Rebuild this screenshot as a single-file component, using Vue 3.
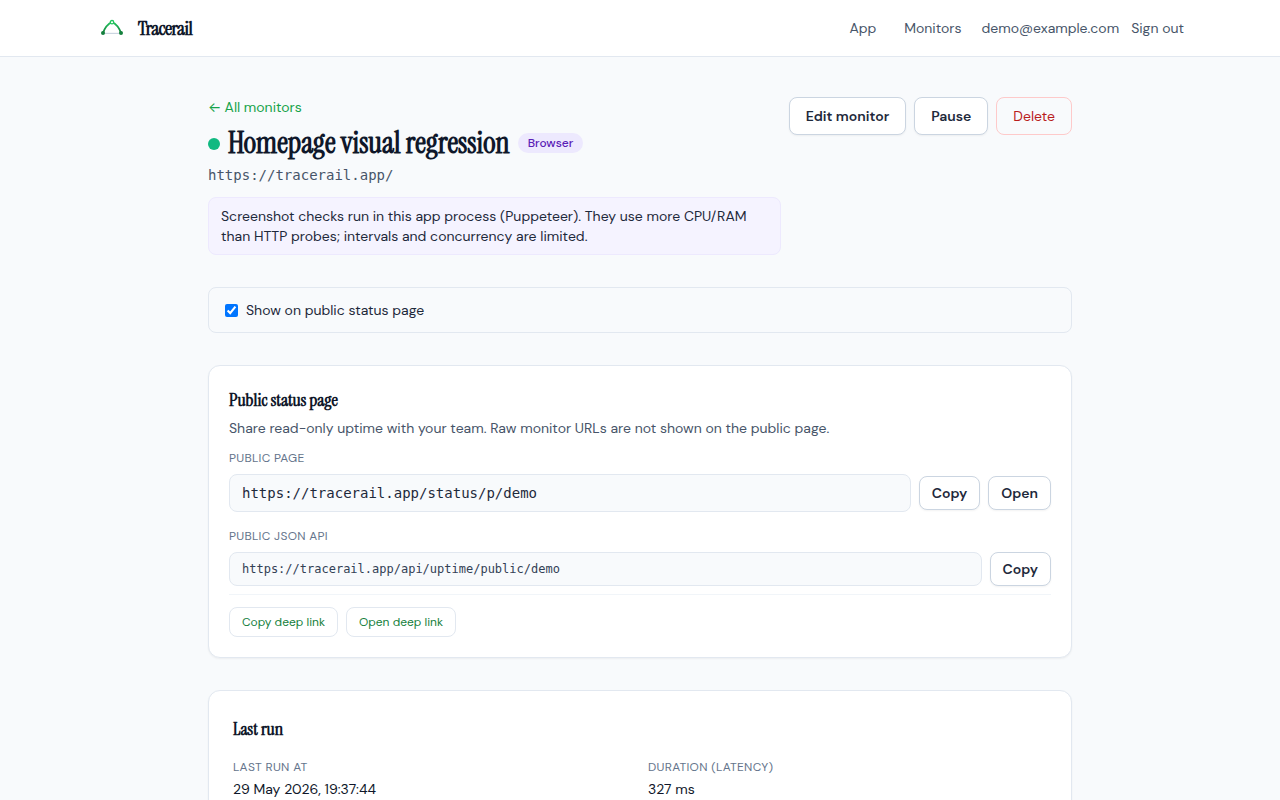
<template>
  <div class="page">
    <header class="topbar">
      <div class="topbar-inner">
        <a class="brand" href="#">
          <svg width="32" height="32" viewBox="0 0 32 32" fill="none" aria-hidden="true">
            <defs>
              <linearGradient id="rail" x1="16" y1="10" x2="16" y2="21" gradientUnits="userSpaceOnUse">
                <stop offset="0" stop-color="#22c55e" />
                <stop offset="1" stop-color="#15803d" />
              </linearGradient>
            </defs>
            <path d="M7 21.4H25" stroke="#cbd5e1" stroke-width="1.2" />
            <path
              d="M7 21C8.6 16.4 11.6 12 16 10C20.4 12 23.4 16.4 25 21"
              stroke="url(#rail)"
              stroke-width="1.9"
              stroke-linecap="round"
            />
            <circle cx="7" cy="21" r="2" fill="#15803d" />
            <circle cx="25" cy="21" r="2" fill="#15803d" />
            <circle cx="16" cy="10.2" r="1.7" fill="#fff" stroke="#22c55e" stroke-width="1.3" />
          </svg>
          <span>Tracerail</span>
        </a>
        <nav class="nav">
          <a href="#">App</a>
          <a href="#">Monitors</a>
          <div class="account">
            <span>{{ user.email }}</span>
            <a href="#">Sign out</a>
          </div>
        </nav>
      </div>
    </header>

    <main class="main">
      <section class="head">
        <div class="head-text">
          <a class="back" href="#"><span class="arrow">←</span> All monitors</a>
          <div class="title">
            <span class="dot"></span>
            <h1>{{ monitor.name }}</h1>
            <span class="badge">{{ monitor.type }}</span>
          </div>
          <p class="url">{{ monitor.url }}</p>
          <p class="notice">
            Screenshot checks run in this app process (Puppeteer). They use more CPU/RAM than HTTP
            probes; intervals and concurrency are limited.
          </p>
        </div>
        <div class="actions">
          <button class="btn">Edit monitor</button>
          <button class="btn">Pause</button>
          <button class="btn btn-danger">Delete</button>
        </div>
      </section>

      <label class="toggle">
        <input v-model="isPublic" type="checkbox" />
        <span>Show on public status page</span>
      </label>

      <section class="card share">
        <h2>Public status page</h2>
        <p class="muted">
          Share read-only uptime with your team. Raw monitor URLs are not shown on the public page.
        </p>
        <div class="label">Public page</div>
        <div class="field">
          <code>{{ links.page }}</code>
          <button class="btn btn-sm" @click="copy(links.page)">Copy</button>
          <button class="btn btn-sm">Open</button>
        </div>
        <div class="label label-api">Public JSON API</div>
        <div class="field">
          <code class="small">{{ links.api }}</code>
          <button class="btn btn-sm" @click="copy(links.api)">Copy</button>
        </div>
        <div class="deep-links">
          <button class="btn-link" @click="copy(links.page)">Copy deep link</button>
          <button class="btn-link">Open deep link</button>
        </div>
      </section>

      <section class="card last-run">
        <h2>Last run</h2>
        <dl class="stats">
          <div v-for="stat in stats" :key="stat.label">
            <dt class="label">{{ stat.label }}</dt>
            <dd>{{ stat.value }}</dd>
          </div>
        </dl>
      </section>
    </main>
  </div>
</template>

<script setup>
import { ref } from "vue";

const user = { email: "demo@example.com" };

const monitor = {
  name: "Homepage visual regression",
  type: "Browser",
  url: "https://tracerail.app/",
};

const links = {
  page: "https://tracerail.app/status/p/demo",
  api: "https://tracerail.app/api/uptime/public/demo",
};

const stats = [
  { label: "Last run at", value: "29 May 2026, 19:37:44" },
  { label: "Duration (latency)", value: "327 ms" },
];

const isPublic = ref(true);

async function copy(text) {
  try {
    await navigator.clipboard.writeText(text);
  } catch (error) {
    console.log(error);
  }
}
</script>

<style>
body {
  margin: 0;
  background: #f8fafc;
}
</style>

<style scoped>
.page {
  height: 100vh;
  overflow: hidden;
  background: #f8fafc;
  color: #0f172a;
  font-family: "DM Sans", "Open Sans", sans-serif;
  font-size: 14px;
  line-height: 20px;
}

.page * {
  box-sizing: border-box;
}

a {
  color: inherit;
  text-decoration: none;
}

h1,
h2,
p,
dl,
dd {
  margin: 0;
}

h1,
h2,
.brand {
  font-family: "Instrument Serif", "Liberation Serif", serif;
  font-weight: 700;
}

.topbar {
  background: #fff;
  border-bottom: 1px solid #e2e8f0;
}

.topbar-inner {
  display: flex;
  align-items: center;
  justify-content: space-between;
  width: 1088px;
  height: 56px;
  margin: 0 auto;
}

.brand {
  display: flex;
  align-items: center;
  gap: 10px;
  font-size: 20px;
  line-height: 28px;
  letter-spacing: -0.025em;
}

.nav {
  display: flex;
  align-items: center;
  gap: 28px;
  color: #475569;
}

.account {
  display: flex;
  gap: 12px;
  margin-left: -8px;
}

.main {
  display: flex;
  flex-direction: column;
  gap: 32px;
  width: 864px;
  margin: 0 auto;
  padding-top: 40px;
}

.head {
  display: flex;
  align-items: flex-start;
  justify-content: space-between;
  gap: 8px;
}

.head-text {
  flex: 1;
  min-width: 0;
}

.back {
  display: block;
  height: 20px;
  color: #16a34a;
}

.arrow {
  font-family: Inter, sans-serif;
  letter-spacing: -0.5px;
}

.title {
  display: flex;
  align-items: center;
  gap: 8px;
  margin-top: 8px;
}

h1 {
  font-size: 30px;
  line-height: 36px;
}

.dot {
  width: 12px;
  height: 12px;
  margin-top: 2px;
  border-radius: 50%;
  background: #10b981;
}

.badge {
  padding: 2px 10px;
  border-radius: 999px;
  background: #ede9fe;
  color: #5b21b6;
  font-size: 12px;
  font-weight: 500;
  line-height: 16px;
}

code,
.url {
  font-family: "DejaVu Sans Mono", monospace;
}

.url {
  margin-top: 4px;
  color: #475569;
}

.notice {
  margin-top: 12px;
  padding: 8px 12px;
  border: 1px solid #ede9fe;
  border-radius: 8px;
  background: #f5f3ff;
  color: #1e293b;
}

.actions {
  display: flex;
  gap: 8px;
}

button {
  font-family: inherit;
  cursor: pointer;
}

.btn {
  padding: 8px 16px;
  border: 1px solid #cbd5e1;
  border-radius: 8px;
  background: #fff;
  box-shadow: 0 1px 2px rgba(0, 0, 0, 0.05);
  color: #1e293b;
  font-size: 14px;
  font-weight: 600;
  line-height: 20px;
}

.btn-sm {
  padding: 6px 12px;
}

.btn-danger {
  border-color: #fecaca;
  background: transparent;
  box-shadow: none;
  color: #b91c1c;
  font-weight: 400;
}

.toggle {
  display: flex;
  align-items: center;
  gap: 8px;
  padding: 12px 16px;
  border: 1px solid #e2e8f0;
  border-radius: 8px;
  color: #1e293b;
}

.toggle input {
  width: 13px;
  height: 13px;
  margin: 0;
}

.card {
  border: 1px solid #e2e8f0;
  border-radius: 12px;
  background: #fff;
  box-shadow: 0 1px 2px rgba(0, 0, 0, 0.05);
}

.share {
  padding: 20px;
}

.last-run {
  padding: 24px;
}

h2 {
  font-size: 18px;
  line-height: 28px;
}

.muted {
  margin-top: 4px;
  color: #475569;
}

.label {
  color: #64748b;
  font-size: 12px;
  line-height: 16px;
  letter-spacing: 0.025em;
  text-transform: uppercase;
}

.share .label {
  margin-top: 12px;
}

.share .label-api {
  margin-top: 16px;
}

.field {
  display: flex;
  align-items: center;
  gap: 8px;
  margin-top: 8px;
}

code {
  flex: 1;
  padding: 8px 12px;
  border: 1px solid #e2e8f0;
  border-radius: 8px;
  background: #f8fafc;
  color: #1e293b;
  font-size: 14px;
  line-height: 20px;
}

code.small {
  color: #334155;
  font-size: 12px;
  line-height: 16px;
}

.deep-links {
  display: flex;
  gap: 8px;
  margin-top: 8px;
  padding-top: 12px;
  border-top: 1px solid #f1f5f9;
}

.btn-link {
  padding: 6px 12px;
  border: 1px solid #e2e8f0;
  border-radius: 8px;
  background: #fff;
  color: #15803d;
  font-size: 12px;
  line-height: 16px;
}

.stats {
  display: grid;
  grid-template-columns: 1fr 1fr;
  gap: 16px;
  margin-top: 16px;
}

dd {
  margin-top: 4px;
}
</style>
